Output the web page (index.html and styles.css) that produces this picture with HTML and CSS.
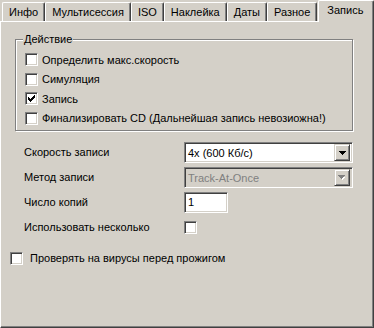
FILE: index.html
```html
<!DOCTYPE html>
<html lang="ru">
<head>
<meta charset="utf-8">
<link rel="stylesheet" href="styles.css">
</head>
<body>
<div class="dialog">
  <div class="tabs">
    <div class="tab">Инфо</div>
    <div class="tab">Мультисессия</div>
    <div class="tab">ISO</div>
    <div class="tab">Наклейка</div>
    <div class="tab">Даты</div>
    <div class="tab">Разное</div>
    <div class="tab tab-active">Запись</div>
  </div>
  <div class="panel">
    <div class="group">
      <div class="legend">Действие</div>
      <div class="group-body">
        <div class="check-row"><span class="cb"></span><span>Определить макс.скорость</span></div>
        <div class="check-row"><span class="cb"></span><span>Симуляция</span></div>
        <div class="check-row"><span class="cb"><svg width="7" height="7" viewBox="0 0 7 7" shape-rendering="crispEdges"><path d="M0 2h1v3h-1z M1 3h1v3h-1z M2 4h1v3h-1z M3 3h1v3h-1z M4 2h1v3h-1z M5 1h1v3h-1z M6 0h1v3h-1z" fill="#000"/></svg></span><span>Запись</span></div>
        <div class="check-row"><span class="cb"></span><span>Финализировать CD (Дальнейшая запись невозиожна!)</span></div>
      </div>
    </div>
    <div class="form">
      <div class="label">Скорость записи</div>
      <div class="combo">
        <span class="combo-text">4x (600 Кб/с)</span>
        <span class="combo-btn"><svg width="7" height="4" viewBox="0 0 7 4" shape-rendering="crispEdges"><path d="M0 0h7v1h-7z M1 1h5v1h-5z M2 2h3v1h-3z M3 3h1v1h-1z" fill="#000"/></svg></span>
      </div>
      <div class="label">Метод записи</div>
      <div class="combo combo-disabled">
        <span class="combo-text">Track-At-Once</span>
        <span class="combo-btn"><svg width="8" height="5" viewBox="0 0 8 5" shape-rendering="crispEdges"><path d="M1 1h1v1h5v1h-1v1h-1v1h-1v-1h-1v-1h-1v-1h-1z" fill="#fff"/><path d="M0 0h7v1h-7z M1 1h5v1h-5z M2 2h3v1h-3z M3 3h1v1h-1z" fill="#808080"/></svg></span>
      </div>
      <div class="label">Число копий</div>
      <div class="edit">1</div>
      <div class="label">Использовать несколько</div>
      <div class="cb-cell"><span class="cb"></span></div>
    </div>
    <div class="check-row virus"><span class="cb"></span><span>Проверять на вирусы перед прожигом</span></div>
  </div>
</div>
</body>
</html>
```

FILE: styles.css
```css
* { box-sizing: border-box; }
html, body {
  margin: 0;
  padding: 0;
}
body {
  width: 374px;
  height: 328px;
  background: #d4d0c8;
  font-family: "Liberation Sans", Arial, sans-serif;
  font-size: 11px;
  color: #000;
  overflow: hidden;
}
.dialog {
  width: 374px;
  height: 328px;
}
.tabs {
  display: flex;
  align-items: flex-end;
  height: 21px;
  padding-left: 2px;
}
.tab {
  height: 19px;
  padding: 0 6px 0 6px;
  line-height: 18px;
  border-left: 1px solid #fff;
  border-top: 1px solid #fff;
  border-right: 1px solid #404040;
  border-top-left-radius: 2px;
  border-top-right-radius: 2px;
  box-shadow: inset -1px 0 #808080;
  white-space: nowrap;
  background: #d4d0c8;
}
.tab-active {
  position: relative;
  z-index: 1;
  height: 22px;
  margin-bottom: -1px;
  margin-left: 1px;
  padding: 0 8px 0 8px;
  line-height: 19px;
  flex: 1;
}
.panel {
  height: 307px;
  border-top: 1px solid #fff;
  border-left: 1px solid #fff;
  border-right: 1px solid #404040;
  border-bottom: 1px solid #404040;
  box-shadow: inset -1px -1px #808080;
  padding-top: 17px;
}
.group {
  margin-left: 14px;
  width: 338px;
  height: 92px;
  border: 1px solid #808080;
  box-shadow: inset 1px 1px #fff, 1px 1px #fff;
}
.legend {
  width: fit-content;
  margin: -7px 0 0 7px;
  padding: 0 1px;
  height: 13px;
  line-height: 13px;
  background: #d4d0c8;
}
.group-body {
  padding: 4px 0 0 9px;
}
.check-row {
  display: flex;
  align-items: center;
  height: 19.5px;
  gap: 4px;
  white-space: nowrap;
}
.cb {
  display: flex;
  align-items: center;
  justify-content: center;
  width: 13px;
  height: 13px;
  flex: none;
  background: #fff;
  border: 1px solid;
  border-color: #808080 #fff #fff #808080;
  box-shadow: inset 1px 1px #404040, inset -1px -1px #d4d0c8;
}
.form {
  display: grid;
  grid-template-columns: 160px 169px;
  grid-auto-rows: 21px;
  row-gap: 4px;
  margin: 11px 0 0 23px;
  align-items: center;
}
.label {
  line-height: 13px;
}
.combo {
  display: flex;
  align-items: center;
  height: 21px;
  background: #fff;
  border: 1px solid;
  border-color: #808080 #fff #fff #808080;
  box-shadow: inset 1px 1px #404040, inset -1px -1px #d4d0c8;
  padding: 2px;
}
.combo-text {
  flex: 1;
  padding-left: 1px;
  white-space: nowrap;
}
.combo-btn {
  display: flex;
  align-items: center;
  justify-content: center;
  width: 16px;
  height: 17px;
  background: #d4d0c8;
  border: 1px solid;
  border-color: #d4d0c8 #404040 #404040 #d4d0c8;
  box-shadow: inset 1px 1px #fff, inset -1px -1px #808080;
}
.combo-disabled {
  background: #d4d0c8;
  color: #808080;
}
.edit {
  width: 44px;
  height: 21px;
  background: #fff;
  border: 1px solid;
  border-color: #808080 #fff #fff #808080;
  box-shadow: inset 1px 1px #404040, inset -1px -1px #d4d0c8;
  padding: 3px 0 0 3px;
  line-height: 13px;
}
.cb-cell {
  display: flex;
  align-items: center;
}
.virus {
  margin: 10px 0 0 9px;
  height: 20px;
  gap: 7px;
}
```
